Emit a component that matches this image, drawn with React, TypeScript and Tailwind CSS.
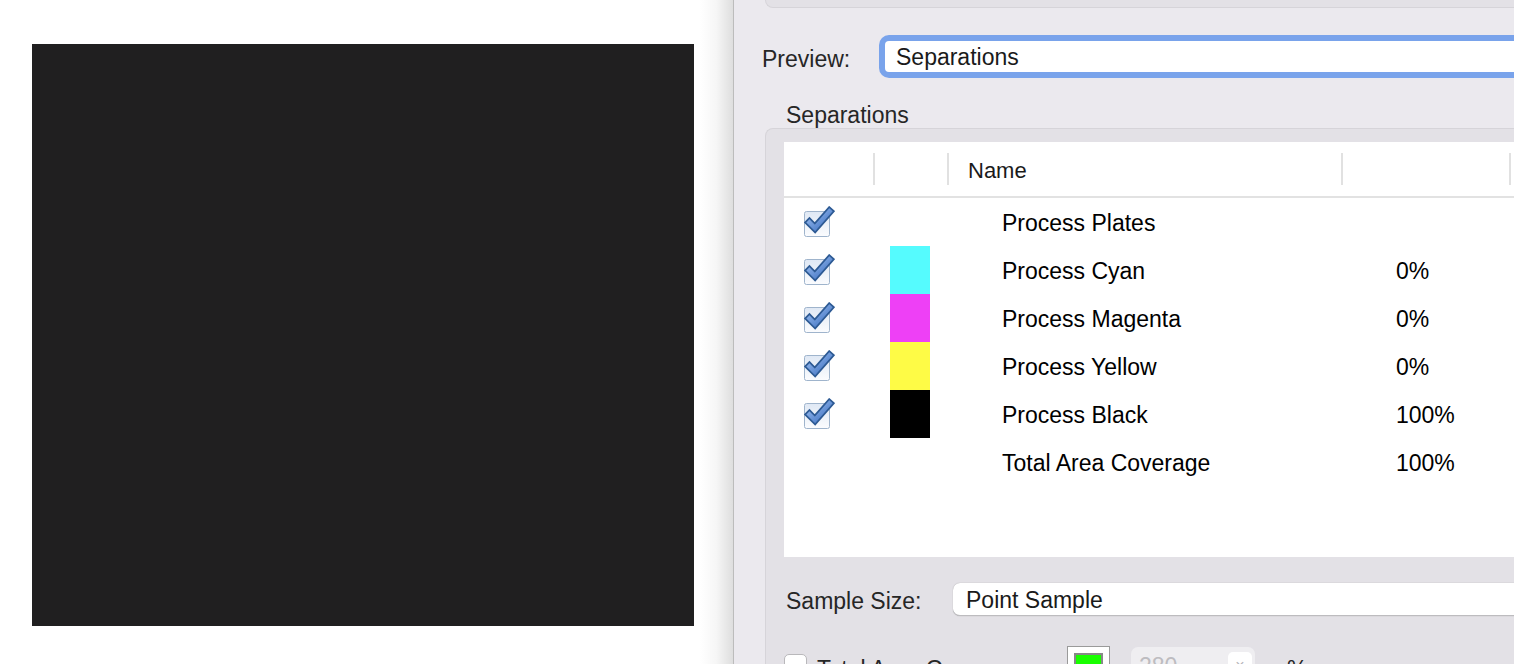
import React from "react"

const rows = [
  { name: "Process Plates", check: true, swatch: "", pct: "" },
  { name: "Process Cyan", check: true, swatch: "bg-[#55fbfe]", pct: "0%" },
  { name: "Process Magenta", check: true, swatch: "bg-[#ee40f6]", pct: "0%" },
  { name: "Process Yellow", check: true, swatch: "bg-[#fefb46]", pct: "0%" },
  { name: "Process Black", check: true, swatch: "bg-black", pct: "100%" },
  { name: "Total Area Coverage", check: false, swatch: "", pct: "100%" },
]

const CheckIcon = () => (
  <svg width="32" height="32" viewBox="0 0 32 32">
    <defs>
      <linearGradient id="cbfill" x1="0" y1="0" x2="0" y2="1">
        <stop offset="0" stopColor="#dfe8f4" />
        <stop offset="1" stopColor="#fbfcfe" />
      </linearGradient>
      <linearGradient id="ckfill" x1="0" y1="0" x2="1" y2="1">
        <stop offset="0" stopColor="#9abdf0" />
        <stop offset="1" stopColor="#3d70c0" />
      </linearGradient>
    </defs>
    <rect x="1.5" y="5.5" width="25" height="25" rx="2" fill="url(#cbfill)" stroke="#9fb4cc" />
    <path d="M6.5 16.5 L12 22 L26.5 5.5" fill="none" stroke="#2d5a94" strokeWidth="8" strokeLinecap="square" strokeLinejoin="miter" />
    <path d="M6.5 16.5 L12 22 L26.5 5.5" fill="none" stroke="url(#ckfill)" strokeWidth="4.5" strokeLinecap="square" strokeLinejoin="miter" />
  </svg>
)

export default function App() {
  return (
    <div className="flex h-[664px] w-[1514px] overflow-hidden bg-white font-['Liberation_Sans',Arial,sans-serif] text-[23px] text-[#1c1c1c]">
      {/* preview canvas */}
      <div className="w-[700px] shrink-0 pl-[32px] pt-[44px]">
        <div className="h-[582px] w-[662px] bg-[#201f20]" />
      </div>
      <div className="w-[33px] shrink-0 bg-gradient-to-r from-white via-[#f6f6f6] to-[#dedede]" />

      {/* output preview panel */}
      <div className="flex min-w-0 flex-1 flex-col border-l border-[#bcbcbc] bg-[#ebe9ee]">
        <div className="ml-[31px] h-[8px] shrink-0 rounded-bl-[8px] border-b border-l border-[#d6d4d9] bg-[#e3e1e6]" />

        <div className="mt-[27px] flex h-[43px] shrink-0 items-center">
          <div className="w-[145px] shrink-0 pl-[28px] pt-[5px] text-[#262626]">Preview:</div>
          <div className="flex h-[43px] flex-1 items-center rounded-l-[10px] border-[6px] border-r-0 border-[#79a3eb] bg-white pl-[11px] pt-[2px] text-[#1a1a1a]">
            Separations
          </div>
        </div>

        <div className="mt-[22px] h-[28px] shrink-0 pl-[52px] pt-[1px] leading-[28px] text-[#262626]">Separations</div>

        <div className="ml-[31px] flex flex-1 flex-col rounded-tl-[8px] border-l border-t border-[#d6d4d9] bg-[#e3e1e6] pl-[18px] pt-[13px]">
          {/* table */}
          <div className="h-[415px] shrink-0 bg-white">
            <div className="flex h-[56px] items-center border-b-2 border-[#e2e2e2]">
              <div className="w-[89px] shrink-0" />
              <div className="h-[32px] w-[2px] shrink-0 bg-[#e1e1e1]" />
              <div className="w-[72px] shrink-0" />
              <div className="h-[32px] w-[2px] shrink-0 bg-[#e1e1e1]" />
              <div className="w-[392px] shrink-0 pl-[19px] pt-[2px] text-[22px] text-[#1a1a1a]">Name</div>
              <div className="h-[32px] w-[2px] shrink-0 bg-[#e1e1e1]" />
              <div className="w-[166px] shrink-0" />
              <div className="h-[32px] w-[2px] shrink-0 bg-[#e1e1e1]" />
            </div>
            {rows.map((r) => (
              <div key={r.name} className="flex h-[48px] items-center text-black">
                <div className="flex w-[106px] shrink-0 pl-[19px]">{r.check && <CheckIcon />}</div>
                <div className={`h-[48px] w-[40px] shrink-0 ${r.swatch}`} />
                <div className="w-[72px] shrink-0" />
                <div className="w-[394px] shrink-0 pt-[2px]">{r.name}</div>
                <div className="shrink-0 pt-[2px]">{r.pct}</div>
              </div>
            ))}
          </div>

          {/* sample size */}
          <div className="mt-[26px] flex h-[33px] shrink-0 items-center">
            <div className="w-[169px] shrink-0 pl-[2px] pt-[4px] text-[#262626]">Sample Size:</div>
            <div className="flex h-[33px] flex-1 items-center rounded-l-[7px] border-b border-[#bdbcbf] bg-white pl-[13px] pt-[2px] text-[#1a1a1a] shadow-[0_0_1px_rgba(0,0,0,0.35)]">
              Point Sample
            </div>
          </div>

          {/* total area coverage */}
          <div className="mt-[30px] flex shrink-0 items-start">
            <div className="mt-[8px] h-[23px] w-[23px] shrink-0 rounded-[5px] border border-[#b9b8bb] bg-white" />
            <div className="ml-[10px] mt-[6px] w-[250px] shrink-0 text-[#262626]">Total Area Coverage</div>
            <div className="h-[40px] w-[43px] shrink-0 border border-[#9a9a9a] bg-white p-[6px]">
              <div className="h-full w-full border-2 border-[#888] bg-[#19ff00]" />
            </div>
            <div className="ml-[21px] mt-[1px] flex h-[38px] w-[124px] shrink-0 items-center justify-between rounded-[7px] bg-[#efeef1] pl-[8px] pr-[3px]">
              <span className="text-[#bdbcc0]">280</span>
              <span className="flex h-[28px] w-[24px] items-center justify-center rounded-[5px] bg-white text-[16px] text-[#b5b4b8]">×</span>
            </div>
            <div className="ml-[32px] mt-[6px] text-[#262626]">%</div>
          </div>
        </div>
      </div>
    </div>
  )
}
